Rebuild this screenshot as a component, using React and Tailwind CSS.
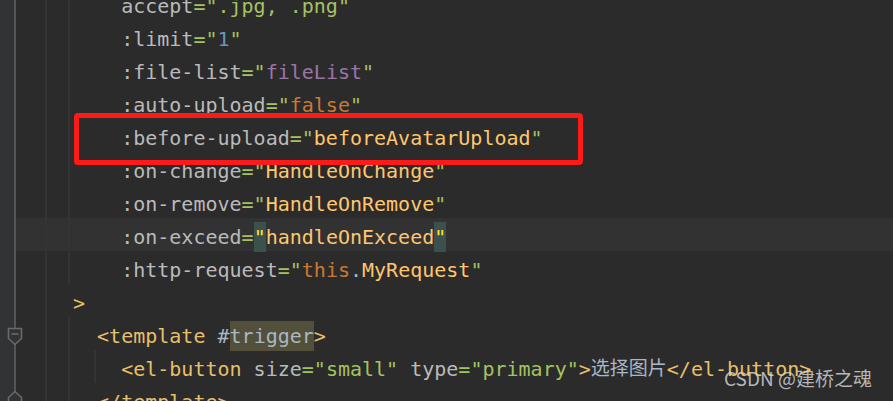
import React from "react";

const attr = "text-[#bababa]";
const str = "text-[#a5c261]";
const tag = "text-[#e8bf6a]";
const fn = "text-[#ffc66d]";
const kw = "text-[#cc7832]";
const plain = "text-[#a9b7c6]";

// each row: tokens [text, className]
const rows = [
  { indent: 4, tokens: [["accept", attr], ['=".jpg, .png"', str]] },
  { indent: 4, tokens: [[":limit", attr], ['="', str], ["1", "text-[#6897bb]"], ['"', str]] },
  { indent: 4, tokens: [[":file-list", attr], ['="', str], ["fileList", "text-[#9876aa]"], ['"', str]] },
  { indent: 4, tokens: [[":auto-upload", attr], ['="', str], ["false", kw], ['"', str]] },
  { indent: 4, tokens: [[":before-upload", attr], ['="', str], ["beforeAvatarUpload", fn], ['"', str]] },
  { indent: 4, tokens: [[":on-change", attr], ['="', str], ["HandleOnChange", fn], ['"', str]] },
  { indent: 4, tokens: [[":on-remove", attr], ['="', str], ["HandleOnRemove", fn], ['"', str]] },
  {
    indent: 4,
    current: true,
    tokens: [
      [":on-exceed", attr],
      ["=", str],
      ['"', "text-[#ffe32a] bg-[#3b514d]"],
      ["handleOnExceed", fn],
      ['"', "text-[#ffe32a] bg-[#3b514d]"],
    ],
  },
  { indent: 4, tokens: [[":http-request", attr], ['="', str], ["this", kw], [".", plain], ["MyRequest", fn], ['"', str]] },
  { indent: 0, tokens: [[">", tag]] },
  { indent: 2, tokens: [["<template", tag], [" #", plain], ["trigger", "text-[#a9b7c6] bg-[#52503a]"], [">", tag]] },
  {
    indent: 4,
    tokens: [
      ["<el-button", tag],
      [" size", attr],
      ['="small"', str],
      [" type", attr],
      ['="primary"', str],
      [">", tag],
      ["选择图片", "text-[#a9b7c6] text-[19px]"],
      ["</el-button>", tag],
    ],
  },
  { indent: 2, tokens: [["</template>", tag]] },
];

function FoldStart() {
  return (
    <svg width="16" height="19" viewBox="0 0 16 19" className="absolute left-[7px] top-[327px]">
      <path d="M1.5 1.5 H14.5 V11.5 L8 17.5 L1.5 11.5 Z" fill="#313335" stroke="#6a6a6a" strokeWidth="1.6" />
      <path d="M4.5 7 H11.5" stroke="#6a6a6a" strokeWidth="1.6" />
    </svg>
  );
}

function FoldEnd() {
  return (
    <svg width="16" height="19" viewBox="0 0 16 19" className="absolute left-[7px] top-[390px]">
      <path d="M1.5 17.5 H14.5 V7.5 L8 1.5 L1.5 7.5 Z" fill="#313335" stroke="#6a6a6a" strokeWidth="1.6" />
    </svg>
  );
}

export default function App() {
  return (
    <div className="relative w-[893px] h-[401px] overflow-hidden bg-[#2b2b2b] flex font-['DejaVu_Sans_Mono','Noto_Sans_CJK_SC',monospace] text-[20px]">
      {/* gutter */}
      <div className="w-[14px] shrink-0 bg-[#313335]" />
      <div className="w-[2px] shrink-0 bg-[#555555]" />

      {/* code */}
      <div className="flex-1 flex flex-col -mt-[13px]">
        {rows.map((row, i) => (
          <div
            key={i}
            className={`h-[33px] shrink-0 flex items-center pt-[4px] whitespace-pre ${row.current ? "bg-[#323232]" : ""}`}
            style={{ paddingLeft: 57 + row.indent * 12.04 }}
          >
            {row.tokens.map(([t, c], j) => (
              <span key={j} className={c}>
                {t}
              </span>
            ))}
          </div>
        ))}
      </div>

      {/* indent guides */}
      <div className="absolute left-[45px] top-0 w-[2px] h-full bg-[#343434]" />
      <div className="absolute left-[68px] top-0 w-[2px] h-[284px] bg-[#343434]" />
      <div className="absolute left-[68px] top-[317px] w-[2px] h-[84px] bg-[#343434]" />
      <div className="absolute left-[94px] top-[350px] w-[2px] h-[33px] bg-[#343434]" />

      <FoldStart />
      <FoldEnd />

      {/* highlight box */}
      <div className="absolute left-[74px] top-[113px] w-[509px] h-[52px] border-[5px] border-[#ff1a1a] rounded-[4px]" />

      {/* watermark */}
      <div className="absolute left-[724px] top-[368px] text-[19px] leading-none text-[#d2d2d2]/85 font-['Noto_Sans_CJK_SC',sans-serif]">
        CSDN @建桥之魂
      </div>
    </div>
  );
}
